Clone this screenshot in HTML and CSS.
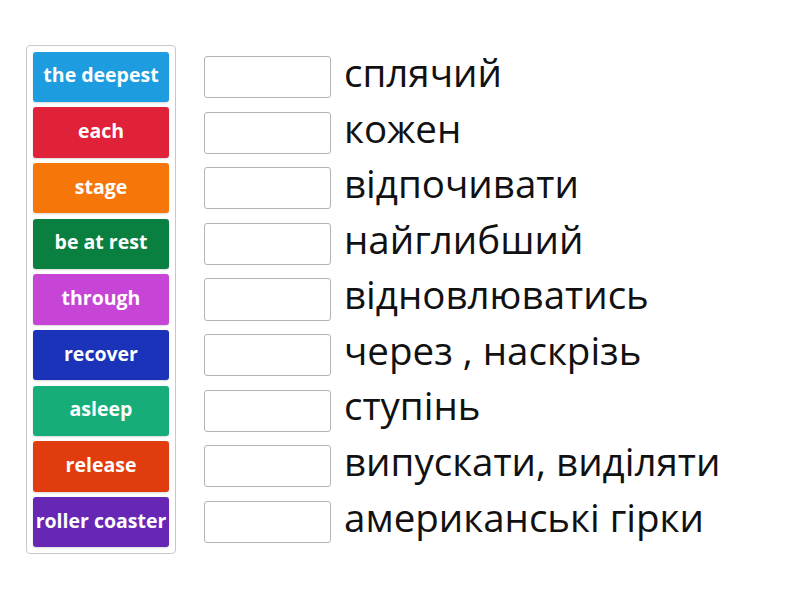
FILE: index.html
```html
<!DOCTYPE html>
<html>
<head>
<meta charset="utf-8">
<link rel="stylesheet" href="styles.css">
</head>
<body>
<div class="page">
  <div class="bank">
    <div class="tile c1">the deepest</div>
    <div class="tile c2">each</div>
    <div class="tile c3">stage</div>
    <div class="tile c4">be at rest</div>
    <div class="tile c5">through</div>
    <div class="tile c6">recover</div>
    <div class="tile c7">asleep</div>
    <div class="tile c8">release</div>
    <div class="tile c9">roller coaster</div>
  </div>
  <div class="rows">
    <div class="row"><div class="slot"></div><div class="word">сплячий</div></div>
    <div class="row"><div class="slot"></div><div class="word">кожен</div></div>
    <div class="row"><div class="slot"></div><div class="word">відпочивати</div></div>
    <div class="row"><div class="slot"></div><div class="word">найглибший</div></div>
    <div class="row"><div class="slot"></div><div class="word">відновлюватись</div></div>
    <div class="row"><div class="slot"></div><div class="word">через , наскрізь</div></div>
    <div class="row"><div class="slot"></div><div class="word">ступінь</div></div>
    <div class="row"><div class="slot"></div><div class="word">випускати, виділяти</div></div>
    <div class="row"><div class="slot"></div><div class="word">американські гірки</div></div>
  </div>
</div>
</body>
</html>
```
FILE: styles.css
```css
html, body {
  margin: 0;
  padding: 0;
  background: #ffffff;
  font-family: "Open Sans", "Noto Sans", sans-serif;
}
.page {
  display: flex;
  align-items: flex-start;
  padding: 45px 0 0 26px;
}
.bank {
  width: 150px;
  height: 509px;
  box-sizing: border-box;
  border: 1px solid #c8c8c8;
  border-radius: 4px;
  padding: 5.7px 6.3px;
  display: flex;
  flex-direction: column;
  gap: 5.25px;
}
.tile {
  height: 50.5px;
  box-sizing: border-box;
  padding-bottom: 4px;
  border-radius: 3px;
  color: #ffffff;
  font-weight: 700;
  font-size: 19.5px;
  display: flex;
  align-items: center;
  justify-content: center;
  white-space: nowrap;
  box-shadow: 0 1px 2px rgba(0,0,0,0.15);
}
.c1 { background: #1d9ce0; }
.c2 { background: #e0213a; }
.c3 { background: #f7760a; }
.c4 { background: #0a8040; }
.c5 { background: #c645d6; }
.c6 { background: #1b33b8; }
.c7 { background: #17ad78; }
.c8 { background: #e03c0e; }
.c9 { background: #6727b5; }
.rows {
  margin-left: 28px;
  padding-top: 11px;
  display: flex;
  flex-direction: column;
  gap: 13.3px;
}
.row {
  display: flex;
  align-items: center;
  height: 42.3px;
}
.slot {
  width: 127px;
  height: 42.3px;
  box-sizing: border-box;
  border: 1px solid #b4b4b4;
  border-radius: 3px;
  background: #ffffff;
  flex: none;
}
.word {
  margin-left: 13px;
  padding-bottom: 10.5px;
  font-size: 38.5px;
  line-height: 42px;
  color: #111111;
  white-space: nowrap;
}
```
